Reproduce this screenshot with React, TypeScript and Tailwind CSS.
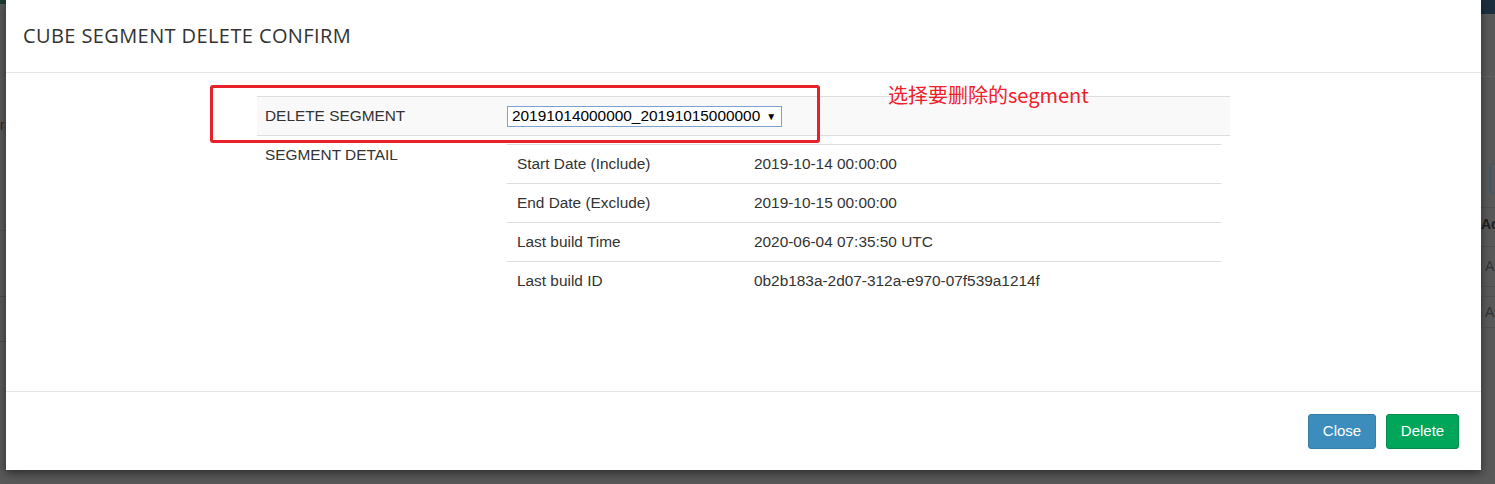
import React from "react";

const details = [
  { label: "Start Date (Include)", value: "2019-10-14 00:00:00" },
  { label: "End Date (Exclude)", value: "2019-10-15 00:00:00" },
  { label: "Last build Time", value: "2020-06-04 07:35:50 UTC" },
  { label: "Last build ID", value: "0b2b183a-2d07-312a-e970-07f539a1214f" },
];

const Backdrop = () => (
  <div className="absolute inset-0 bg-[#595959]">
    {/* dimmed page behind the modal */}
    <div className="absolute left-0 top-0 w-[6px] h-[4px] bg-[#1d3b33]" />
    <div className="absolute left-0 top-[127px] w-[6px] h-px bg-[#505050]" />
    <div className="absolute left-0 top-[230px] w-[6px] h-px bg-[#505050]" />
    <div className="absolute left-0 top-[296px] w-[6px] h-px bg-[#4a4a4a]" />
    <div className="absolute left-0 top-[341px] w-[6px] h-px bg-[#4a4a4a]" />
    <div className="absolute left-0 top-[118px] text-[14px] leading-none text-[#4a2025] font-['Liberation_Sans',sans-serif]">r</div>

    <div className="absolute right-0 top-0 w-[14px] h-[14px] bg-[#1c2f3e]" />
    <div className="absolute right-0 top-[76px] w-[14px] border-t border-dotted border-[#6a6a6a]" />
    <div className="absolute left-[1490px] top-[163px] w-[10px] h-[31px] rounded-[3px] border border-[#3f5568]" />
    <div className="absolute right-0 top-[207px] w-[14px] border-t border-[#505050]" />
    <div className="absolute left-[1481px] top-[217px] w-[14px] overflow-hidden whitespace-nowrap text-[14px] font-bold leading-none text-[#1f1f1f] font-['Liberation_Sans',sans-serif]">Ac</div>
    <div className="absolute left-[1481px] top-[246px] w-[14px] h-[41px] border-y border-l border-[#505050] flex items-center pl-[3px] text-[14px] text-[#333] font-['Liberation_Sans',sans-serif]">A</div>
    <div className="absolute left-[1481px] top-[296px] w-[14px] h-[32px] border-y border-l border-[#505050] flex items-center pl-[3px] text-[14px] text-[#333] font-['Liberation_Sans',sans-serif]">A</div>
  </div>
);

export default function App() {
  return (
    <div className="relative w-[1495px] h-[484px] overflow-hidden font-['Liberation_Sans',Arial,sans-serif] text-[15.4px] text-[#333]">
      <Backdrop />

      <div className="absolute left-[6px] top-0 w-[1475px] h-[470px] bg-white shadow-[0_3px_9px_rgba(0,0,0,0.5)] flex flex-col">
        <div className="h-[73px] border-b border-[#e5e5e5] pl-[17px] flex items-center">
          <h4 className="text-[20px] leading-none text-[#333] font-['Open_Sans',sans-serif] tracking-[0.4px]">
            CUBE SEGMENT DELETE CONFIRM
          </h4>
        </div>

        <div className="flex-1 pt-[23px] pl-[251px]">
          <div className="w-[973px]">
            <div className="flex h-[40px] bg-[#f9f9f9] border-y border-[#ddd]">
              <div className="w-[250px] pl-[8px] flex items-center">DELETE SEGMENT</div>
              <div className="flex items-center">
                <div className="h-[21px] w-[275px] border border-[#7da2ce] bg-white flex items-center pl-[4px] text-[15.4px] text-black">
                  <span>20191014000000_20191015000000</span>
                  <span className="ml-[6px] text-[10px]">▼</span>
                </div>
              </div>
            </div>
            <div className="flex">
              <div className="w-[250px] pl-[8px] pt-[7px]">SEGMENT DETAIL</div>
              <div className="pt-[8px] w-[714px]">
                {details.map((d) => (
                  <div key={d.label} className="flex h-[39px] items-center border-t border-[#ddd]">
                    <div className="w-[247px] pl-[10px]">{d.label}</div>
                    <div>{d.value}</div>
                  </div>
                ))}
              </div>
            </div>
          </div>
        </div>

        <div className="h-[79px] border-t border-[#e5e5e5] flex items-center justify-end pr-[22px] gap-[10px]">
          <button className="h-[35px] w-[68px] rounded-[3px] bg-[#3c8dbc] border border-[#367fa9] text-white text-[15px]">
            Close
          </button>
          <button className="h-[35px] w-[73px] rounded-[3px] bg-[#00a65a] border border-[#008d4c] text-white text-[15px]">
            Delete
          </button>
        </div>

        {/* annotation over the dialog */}
        <div className="absolute left-[204px] top-[85px] w-[610px] h-[58px] border-[3px] border-[#e8202a] rounded-[3px]" />
        <div className="absolute left-[882px] top-[81px] text-[20px] leading-[28px] text-[#f02029] font-['Noto_Sans_CJK_SC',sans-serif]">
          选择要删除的segment
        </div>
      </div>
    </div>
  );
}
